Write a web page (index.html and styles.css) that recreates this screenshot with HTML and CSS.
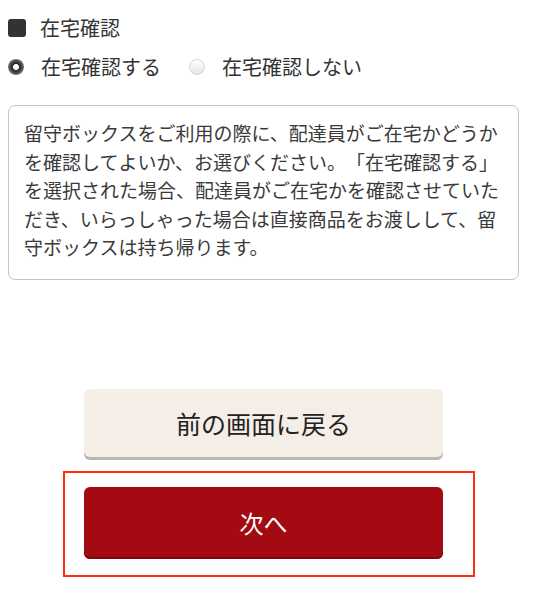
FILE: index.html
```html
<!DOCTYPE html>
<html lang="ja">
<head>
<meta charset="utf-8">
<title>在宅確認</title>
<link rel="stylesheet" href="styles.css">
</head>
<body>
<div class="page">
  <div class="heading">
    <span class="square"></span>
    <span class="heading-text">在宅確認</span>
  </div>
  <div class="radios">
    <label class="radio-item">
      <span class="radio radio-on"></span>
      <span class="radio-text">在宅確認する</span>
    </label>
    <label class="radio-item">
      <span class="radio radio-off"></span>
      <span class="radio-text">在宅確認しない</span>
    </label>
  </div>
  <div class="note">留守ボックスをご利用の際に、配達員がご在宅かどうかを確認してよいか、お選びください。「在宅確認する」を選択された場合、配達員がご在宅かを確認させていただき、いらっしゃった場合は直接商品をお渡しして、留守ボックスは持ち帰ります。</div>
  <div class="actions">
    <button class="btn btn-back" type="button">前の画面に戻る</button>
    <div class="highlight">
      <button class="btn btn-next" type="button">次へ</button>
    </div>
  </div>
</div>
</body>
</html>
```

FILE: styles.css
```css
html, body {
  margin: 0;
  padding: 0;
  background: #ffffff;
}

body {
  font-family: "Noto Sans CJK JP", "Noto Sans", sans-serif;
  color: #333333;
  text-spacing-trim: space-all;
}

.page {
  width: 511px;
  padding: 14px 0 0 8px;
}

.heading {
  display: flex;
  align-items: center;
  height: 28px;
}

.square {
  width: 18px;
  height: 18px;
  border-radius: 3px;
  background: #333333;
  margin-right: 14px;
}

.heading-text {
  font-size: 20px;
  line-height: 28px;
}

.radios {
  display: flex;
  align-items: center;
  gap: 28px;
  height: 28px;
  margin-top: 11px;
}

.radio-item {
  display: flex;
  align-items: center;
}

.radio {
  width: 16px;
  height: 16px;
  border-radius: 50%;
  box-sizing: border-box;
  margin-right: 17px;
}

.radio-on {
  background: radial-gradient(circle at 50% 50%, #ffffff 0, #ffffff 2.6px, #262626 3.4px, #444444 5.5px, #7a7a7a 8px);
}

.radio-off {
  border: 1px solid #d4d4d4;
  background: linear-gradient(#ffffff, #e6e6e6);
}

.radio-text {
  font-size: 20px;
  line-height: 28px;
}

.note {
  margin-top: 24px;
  border: 1px solid #c4c4c4;
  border-radius: 7px;
  padding: 13px 15px 17px 15px;
  font-size: 19px;
  line-height: 28.5px;
  color: #3a3a3a;
  text-spacing-trim: space-all;
}

.actions {
  margin-top: 109px;
  display: flex;
  flex-direction: column;
}

.btn {
  display: block;
  width: 359px;
  border: none;
  border-radius: 6px;
  font-family: "Noto Sans CJK JP", "Noto Sans", sans-serif;
  padding: 0;
  cursor: pointer;
}

.btn-back {
  margin-left: 76px;
  height: 68px;
  background: #f4eee7;
  color: #222222;
  font-size: 25px;
  box-shadow: 0 3px 0 #b9b6b0;
}

.highlight {
  margin-top: 14px;
  margin-left: 55px;
  width: 412px;
  box-sizing: border-box;
  border: 2px solid #ff2d12;
  padding: 14px 30px 16px 19px;
}

.btn-next {
  height: 72px;
  background: #a40a12;
  color: #ffffff;
  font-size: 24px;
  box-shadow: inset 0 -2px 0 #7e050b;
}
```
